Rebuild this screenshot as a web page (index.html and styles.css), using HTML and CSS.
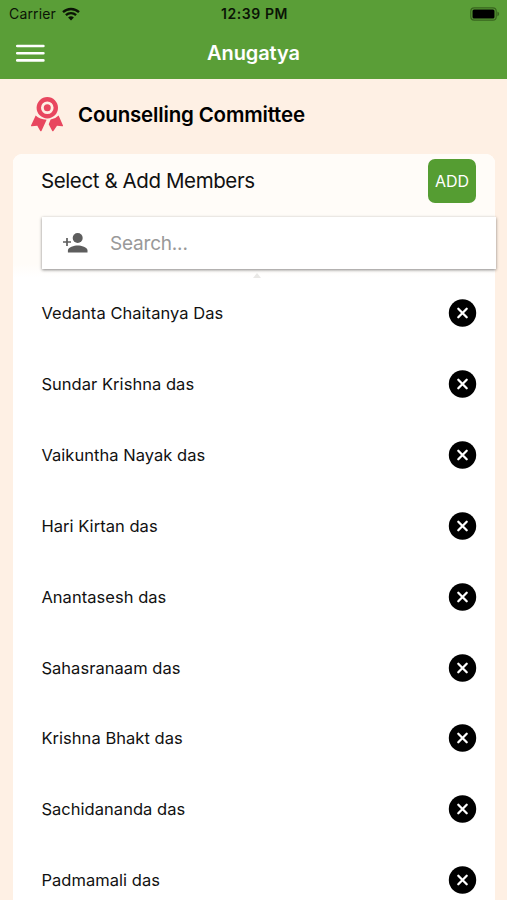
FILE: index.html
```html
<!DOCTYPE html>
<html lang="en">
<head>
<meta charset="utf-8">
<meta name="viewport" content="width=device-width, initial-scale=1">
<title>Anugatya</title>
<link rel="stylesheet" href="styles.css">
</head>
<body>

<div class="header">
  <div class="status">
    <div class="carrier">
      <span>Carrier</span>
      <svg class="wifi" viewBox="0 0 18 14">
        <path d="M1 5.2a11.6 11.6 0 0 1 16 0M3.9 8.2a7.4 7.4 0 0 1 10.2 0" fill="none" stroke="#0b1406" stroke-width="2.3"/>
        <path d="M9 13.6l-2.9-3a4.2 4.2 0 0 1 5.8 0z" fill="#0b1406"/>
      </svg>
    </div>
    <div class="time">12:39 PM</div>
    <svg class="battery" viewBox="0 0 30 14">
      <rect x=".8" y=".8" width="25.4" height="12.4" rx="3.4" fill="none" stroke="#39651f" stroke-width="1.2"/>
      <rect x="2.5" y="2.6" width="22" height="8.8" rx="1.5"/>
      <path d="M27.4 4.6q1.8.9 1.8 2.4t-1.8 2.4z" fill="#39651f"/>
    </svg>
  </div>
  <div class="navbar">
    <button class="menu" aria-label="Menu">
      <svg viewBox="0 0 29 19"><path d="M1.200 2h26.200M1.200 9.200h26.200M1.200 16.400h26.200"/></svg>
    </button>
    <h1>Anugatya</h1>
  </div>
</div>

<div class="title">
  <svg class="award" viewBox="0 0 32 35">
    <g fill="#e8475f">
      <path d="M4.7 18.6L0 28.4q-.2 1 .8.900l5.500-.6 2.800 5q.8 1 1.500 0l5-10.900q-7-.2-10.900-4.200z"/>
      <path d="M27.6 18.6l4.400 9.800q.2 1-.8.900l-5.200-.6-3.400 5q-.8 1-1.500 0l-3.400-6.500 1.900-4.600q5-.8 8-4z"/>
      <path fill-rule="evenodd" d="M16.300 0a10.700 10.700 0 1 1 0 21.400a10.700 10.700 0 0 1 0-21.400zM16.300 4.400a6.300 6.300 0 1 0 0 12.600a6.300 6.300 0 0 0 0-12.600z"/>
      <circle cx="16.3" cy="10.7" r="3.5"/>
    </g>
  </svg>
  <h2>Counselling Committee</h2>
</div>

<div class="card">
  <div class="card-top">
    <div class="select">
      <h3>Select &amp; Add Members</h3>
      <button class="add">ADD</button>
    </div>
    <label class="search">
      <svg class="person" viewBox="0 0 25 20">
        <circle cx="14.7" cy="5" r="5"/>
        <path d="M4.9 19.500v-2c0-3.300 6.300-5 9.800-5s9.800 1.700 9.800 5v2z"/>
        <path d="M4 5v8M0 9h8" stroke="#5d5d5d" stroke-width="1.7"/>
      </svg>
      <input type="text" placeholder="Search...">
    </label>
    <div class="arrow"></div>
  </div>

  <ul class="members">
    <li><span>Vedanta Chaitanya Das</span><button class="remove" aria-label="Remove"><svg viewBox="0 0 28 28"><circle cx="14" cy="14" r="13.7"/><path d="M9.8 9.8l8.4 8.4M18.2 9.8l-8.4 8.4"/></svg></button></li>
    <li><span>Sundar Krishna das</span><button class="remove" aria-label="Remove"><svg viewBox="0 0 28 28"><circle cx="14" cy="14" r="13.7"/><path d="M9.8 9.8l8.4 8.4M18.2 9.8l-8.4 8.4"/></svg></button></li>
    <li><span>Vaikuntha Nayak das</span><button class="remove" aria-label="Remove"><svg viewBox="0 0 28 28"><circle cx="14" cy="14" r="13.7"/><path d="M9.8 9.8l8.4 8.4M18.2 9.8l-8.4 8.4"/></svg></button></li>
    <li><span>Hari Kirtan das</span><button class="remove" aria-label="Remove"><svg viewBox="0 0 28 28"><circle cx="14" cy="14" r="13.7"/><path d="M9.8 9.8l8.4 8.4M18.2 9.8l-8.4 8.4"/></svg></button></li>
    <li><span>Anantasesh das</span><button class="remove" aria-label="Remove"><svg viewBox="0 0 28 28"><circle cx="14" cy="14" r="13.7"/><path d="M9.8 9.8l8.4 8.4M18.2 9.8l-8.4 8.4"/></svg></button></li>
    <li><span>Sahasranaam das</span><button class="remove" aria-label="Remove"><svg viewBox="0 0 28 28"><circle cx="14" cy="14" r="13.7"/><path d="M9.8 9.8l8.4 8.4M18.2 9.8l-8.4 8.4"/></svg></button></li>
    <li><span>Krishna Bhakt das</span><button class="remove" aria-label="Remove"><svg viewBox="0 0 28 28"><circle cx="14" cy="14" r="13.7"/><path d="M9.8 9.8l8.4 8.4M18.2 9.8l-8.4 8.4"/></svg></button></li>
    <li><span>Sachidananda das</span><button class="remove" aria-label="Remove"><svg viewBox="0 0 28 28"><circle cx="14" cy="14" r="13.7"/><path d="M9.8 9.8l8.4 8.4M18.2 9.8l-8.4 8.4"/></svg></button></li>
    <li><span>Padmamali das</span><button class="remove" aria-label="Remove"><svg viewBox="0 0 28 28"><circle cx="14" cy="14" r="13.7"/><path d="M9.8 9.8l8.4 8.4M18.2 9.8l-8.4 8.4"/></svg></button></li>
  </ul>
</div>

</body>
</html>
```
FILE: styles.css
```css
* {
  box-sizing: border-box;
}

body {
  margin: 0;
  height: 100vh;
  overflow: hidden;
  background-color: #fef0e4;
  font-family: Inter, "Liberation Sans", sans-serif;
  color: #111;
}

h1, h2, h3, ul {
  margin: 0;
  padding: 0;
}

button {
  border: 0;
  padding: 0;
  background: none;
  font-family: inherit;
}

.header {
  height: 79px;
  background-color: #5a9e37;
}

.status {
  display: grid;
  grid-template-columns: 1fr auto 1fr;
  align-items: center;
  height: 27px;
  padding: 0 7px 0 9px;
  color: #0b1406;
  font-size: 14px;
}

.carrier {
  display: flex;
  align-items: center;
  gap: 6px;
  letter-spacing: 0.15px;
}

.wifi {
  width: 18px;
  height: 14px;
}

.time {
  font-weight: 600;
  letter-spacing: 0.6px;
}

.battery {
  width: 30px;
  height: 14px;
  justify-self: end;
}

.navbar {
  display: grid;
  grid-template-columns: 1fr auto 1fr;
  align-items: center;
  height: 52px;
  padding: 0 16px;
}

.navbar h1 {
  color: #fff;
  font-size: 20px;
  font-weight: 600;
  letter-spacing: -0.1px;
}

.menu {
  width: 29px;
  height: 19px;
}

.menu svg {
  display: block;
  width: 29px;
  height: 19px;
}

.menu path {
  stroke: #fff;
  stroke-width: 2.6;
  stroke-linecap: round;
}

.title {
  display: flex;
  align-items: center;
  gap: 15px;
  height: 75px;
  padding: 0 31px 4px;
}

.award {
  width: 32px;
  height: 35px;
}

.title h2 {
  color: #000;
  font-size: 20.5px;
  font-weight: 600;
  letter-spacing: -0.17px;
}

.card {
  margin: 0 12px 0 13px;
  border-radius: 9px 9px 0 0;
  background-color: #fff;
}

.card-top {
  height: 124px;
  border-radius: 9px 9px 0 0;
  background: linear-gradient(#fffcf8 110px, #fff);
}

.select {
  display: flex;
  align-items: center;
  justify-content: space-between;
  height: 63px;
  padding: 0 19px 10px 28px;
}

.select h3 {
  font-size: 20.5px;
  font-weight: 400;
  letter-spacing: -0.4px;
}

.add {
  width: 48px;
  height: 44px;
  border-radius: 7px;
  background-color: #559d32;
  color: #fff;
  font-size: 16px;
}

.search {
  display: flex;
  align-items: center;
  gap: 22px;
  height: 52px;
  margin: 0 -1px 0 29px;
  padding-left: 21px;
  background-color: #fff;
  box-shadow: 0 1px 3px rgba(0, 0, 0, 0.48);
}

.person {
  width: 25px;
  height: 20px;
  fill: #5d5d5d;
}

.search input {
  flex: 1;
  min-width: 0;
  border: 0;
  padding: 0;
  outline: 0;
  background: none;
  font-family: inherit;
  font-size: 19px;
  letter-spacing: -0.2px;
}

.search input::placeholder {
  color: #999;
}

.arrow {
  width: 0;
  margin: 4px 0 0 240px;
  border: 4px solid transparent;
  border-top: 0;
  border-bottom: 5px solid #e9e8e6;
}

.members {
  list-style: none;
}

.members li {
  display: flex;
  align-items: center;
  justify-content: space-between;
  height: 70.85px;
  padding: 0 18px 0 28.4px;
  font-size: 16.5px;
  letter-spacing: 0.04px;
}

.remove {
  width: 29px;
  height: 28px;
}

.remove svg {
  display: block;
  width: 29px;
  height: 28px;
}

.remove path {
  stroke: #fff;
  stroke-width: 2.3;
  stroke-linecap: round;
}
```
